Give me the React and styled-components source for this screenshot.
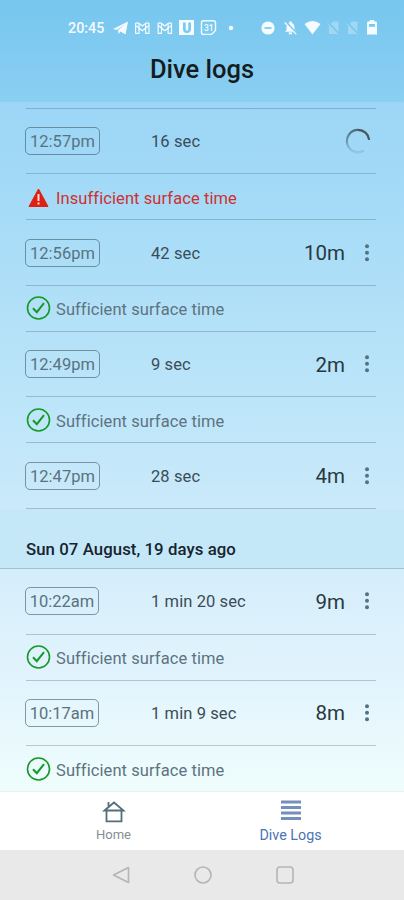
import styled, { createGlobalStyle } from "styled-components";

const GlobalStyle = createGlobalStyle`
  * {
    box-sizing: border-box;
  }

  body {
    margin: 0;
    font-family: Roboto, "Liberation Sans", sans-serif;
  }
`;

const Screen = styled.div`
  width: 404px;
  height: 900px;
  display: flex;
  flex-direction: column;
  overflow: hidden;
  background: #ffffff;
`;

const Header = styled.header`
  height: 102px;
  flex-shrink: 0;
  background: linear-gradient(#76c6ef, #8bcff2);
`;

const StatusBar = styled.div`
  height: 56px;
  padding: 0 26px 0 68px;
  display: flex;
  align-items: center;
  color: #f4fcff;
`;

const Clock = styled.span`
  width: 45px;
  font-size: 14.3px;
  font-weight: 500;
`;

const StatusIcons = styled.svg`
  width: 265px;
  height: 20px;
  display: block;
`;

const Title = styled.h1`
  margin: 0;
  height: 28px;
  line-height: 26px;
  text-align: center;
  font-size: 25.5px;
  font-weight: 500;
  color: #151c20;
`;

const LogList = styled.main`
  flex: 1;
  min-height: 0;
  overflow: hidden;
  padding-top: 6px;
  background: linear-gradient(
    #9cd5f6 0%,
    #a5dbf7 15%,
    #b3e1f8 32%,
    #c7e9fa 56%,
    #d5eefb 68%,
    #e2f4fd 84%,
    #effdfc 100%
  );
`;

const Group = styled.section`
  padding: 0 28px 0 26px;
`;

const Divider = styled.div`
  height: 1px;
  background: rgba(65, 100, 120, 0.32);
`;

const DiveRow = styled.div`
  height: 64.45px;
  display: grid;
  grid-template-columns: 125px 1fr auto 31px;
  align-items: center;
`;

const Time = styled.span`
  justify-self: start;
  width: ${(props) => (props.$morning ? "74px" : "75px")};
  height: 28px;
  line-height: 27px;
  margin-left: -1px;
  border: 1px solid rgba(65, 90, 105, 0.6);
  border-radius: 5px;
  text-align: center;
  font-size: 16.5px;
  white-space: nowrap;
  color: #5a7280;
`;

const Duration = styled.span`
  padding-top: 1px;
  font-size: 16.5px;
  letter-spacing: 0.1px;
  color: #3b4c56;
`;

const Depth = styled.span`
  padding-top: 1px;
  font-size: 20.5px;
  color: #2a3840;
`;

const Menu = styled.button`
  width: 43px;
  height: 28px;
  padding: 0;
  border: none;
  background: none;
  display: flex;
  align-items: center;
  justify-content: center;

  svg {
    display: block;
  }
`;

const Loader = styled.svg`
  grid-column: 3 / 5;
  justify-self: end;
  width: 26px;
  height: 26px;
  margin-right: 5px;
`;

const SurfaceRow = styled.div`
  height: 45px;
  display: flex;
  align-items: center;
  gap: 5px;
  font-size: 16.5px;
  letter-spacing: 0.08px;
  color: ${(props) => (props.$warning ? "#cf3030" : "#5d737f")};

  span {
    padding-top: 3px;
  }

  svg {
    flex-shrink: 0;
  }
`;

const DateHeading = styled.h2`
  height: 59.5px;
  margin: 0;
  padding: 20px 26px 0;
  line-height: 40px;
  background: #c5e8f9;
  font-size: 16.8px;
  font-weight: 500;
  letter-spacing: 0.06px;
  color: #15242d;
`;

const TabBar = styled.nav`
  height: 59px;
  flex-shrink: 0;
  display: flex;
  padding: 0 25px;
  border-top: 1px solid #e7f0f3;
  background: #ffffff;
`;

const Tab = styled.a`
  flex: 1;
  display: flex;
  flex-direction: column;
  align-items: center;
  padding-top: 7px;
  font-size: ${(props) => (props.$active ? "14.3px" : "13px")};
  line-height: 22px;
  color: ${(props) => (props.$active ? "#4b74b5" : "#868e93")};

  svg {
    width: 24px;
    height: 24px;
    margin-bottom: 1px;
  }
`;

const SystemBar = styled.footer`
  height: 50px;
  flex-shrink: 0;
  display: flex;
  align-items: center;
  justify-content: center;
  gap: 58px;
  padding-left: 2px;
  background: #e9e9e9;
`;

const todayDives = [
  { time: "12:57pm", duration: "16 sec", loading: true, surface: "Insufficient" },
  { time: "12:56pm", duration: "42 sec", depth: "10m", surface: "Sufficient" },
  { time: "12:49pm", duration: "9 sec", depth: "2m", surface: "Sufficient" },
  { time: "12:47pm", duration: "28 sec", depth: "4m" },
];

const augustDives = [
  { time: "10:22am", duration: "1 min 20 sec", depth: "9m", surface: "Sufficient" },
  { time: "10:17am", duration: "1 min 9 sec", depth: "8m", surface: "Sufficient" },
];

function WarningIcon() {
  return (
    <svg width="25" height="24" viewBox="0 0 25 24">
      <path d="M12.5 4 L22 21.5 H3 Z" fill="#df1f12" stroke="#df1f12" strokeLinejoin="round" />
      <path d="M12.5 9 V16 M12.5 17.6 V19.6" stroke="#fbe8e5" strokeWidth="1.9" />
    </svg>
  );
}

function CheckIcon() {
  return (
    <svg width="25" height="24" viewBox="0 0 25 24" fill="none" stroke="#169829">
      <circle cx="12.5" cy="12" r="11" strokeWidth="1.6" />
      <path d="M7 12.3 L10.8 16.2 L18 7.2" strokeWidth="2" />
    </svg>
  );
}

function Spinner() {
  return (
    <Loader viewBox="0 0 26 26" fill="none" strokeWidth="2.2">
      <defs>
        <linearGradient id="spin" x1="0" y1="0" x2="0" y2="1">
          <stop offset="0" stopColor="#4f6b7a" />
          <stop offset="0.5" stopColor="#6e98ad" />
          <stop offset="1" stopColor="#84b5cd" stopOpacity="0.5" />
        </linearGradient>
      </defs>
      <path d="M13 1.8 A11.3 11.3 0 1 0 19 22.8" stroke="url(#spin)" />
      <path d="M13 1.8 A11.3 11.3 0 0 1 24.2 11.8" stroke="#47565f" />
    </Loader>
  );
}

function DiveEntry({ dive }) {
  return (
    <>
      <DiveRow>
        <Time $morning={dive.time.endsWith("am")}>{dive.time}</Time>
        <Duration>{dive.duration}</Duration>
        {dive.loading ? (
          <Spinner />
        ) : (
          <>
            <Depth>{dive.depth}</Depth>
            <Menu aria-label="Dive options">
              <svg width="6" height="18" fill="#557282">
                <circle cx="3" cy="2.3" r="2" />
                <circle cx="3" cy="8.8" r="2" />
                <circle cx="3" cy="15.3" r="2" />
              </svg>
            </Menu>
          </>
        )}
      </DiveRow>
      <Divider />
      {dive.surface && (
        <>
          <SurfaceRow $warning={dive.surface === "Insufficient"}>
            {dive.surface === "Insufficient" ? <WarningIcon /> : <CheckIcon />}
            <span>{dive.surface} surface time</span>
          </SurfaceRow>
          <Divider />
        </>
      )}
    </>
  );
}

function StatusGlyphs() {
  return (
    <StatusIcons viewBox="113 18 265 20" fill="none" stroke="currentColor">
      <path d="M113 29 L128 21.5 L125.5 34.5 L120.5 31.5 L118.5 34 L118 30 L125 24.5 L116.5 30 Z" fill="currentColor" stroke="none" />
      {[135, 157.5].map((x) => (
        <g key={x} transform={`translate(${x} 22)`} strokeWidth="1.2" strokeLinejoin="round">
          <path d="M.6 1.5 Q2 .2 3.8 1.3 L7.3 4 L10.8 1.3 Q12.6 .2 14 1.5 V11.3 H10.6 V6 L7.3 8.7 L4 6 V11.3 H.6 Z" />
          <path d="M.6 3.5 L4 6 V1.5 M14 3.5 L10.6 6 V1.5" />
        </g>
      ))}
      <path d="M179 20 H194 V35 H179 Z M183 22.5 V29 Q183 33 186.7 33 Q191 33 191 29 V22.5 H188.3 V29 Q188.3 30.7 187 30.7 Q185.7 30.7 185.7 29 V22.5 Z" fill="currentColor" fillRule="evenodd" stroke="none" />
      <path d="M203.5 20.8 H213.5 Q215.5 20.8 215.5 22.8 V30.5 L211.5 34.4 H203.5 Q201.5 34.4 201.5 32.4 V22.8 Q201.5 20.8 203.5 20.8 Z" strokeWidth="1.4" />
      <text x="204" y="31.3" fill="currentColor" stroke="none" fontSize="8.5" fontWeight="500">31</text>
      <circle cx="231" cy="28" r="2.2" fill="currentColor" stroke="none" />
      <circle cx="268" cy="28" r="6.6" fill="currentColor" stroke="none" />
      <path d="M264.5 28 H271.5" stroke="#7dc8ef" strokeWidth="1.7" />
      <path d="M285 31.8 L286.5 30 V26.8 Q286.8 23.5 289.3 22.7 V21.5 H291.7 V22.7 Q294.3 23.5 294.5 26.8 V30 L296.3 31.8 Z" fill="currentColor" stroke="none" />
      <path d="M288.8 33.3 H292" strokeWidth="2" />
      <path d="M285.5 21.5 L297 34.5" stroke="#7dc8ef" strokeWidth="2.3" />
      <path d="M284.7 22.5 L296.3 34.3" strokeWidth="1.2" />
      <path d="M304.5 24 Q312.5 18.2 320.5 24 L312.5 34.5 Z" fill="currentColor" stroke="none" />
      {[328, 347].map((x) => (
        <g key={x} transform={`translate(${x} 21)`} opacity="0.3">
          <path d="M1 5 L5 .5 H10.5 V13 H1 Z" fill="currentColor" stroke="none" />
          <path d="M0 1.5 L11 13" stroke="#7dc8ef" strokeWidth="2" />
          <path d="M-.5 2.5 L10.5 14" strokeWidth="1" />
        </g>
      ))}
      <path d="M368 21.5 H369.8 V20 H374.3 V21.5 H376 Q377 21.5 377 22.5 V34.5 H367 V22.5 Q367 21.5 368 21.5 Z" fill="currentColor" stroke="none" />
      <path d="M369 24 H375 V26.8 H369 Z" fill="#7dc8ef" stroke="none" />
    </StatusIcons>
  );
}

export default function App() {
  return (
    <>
      <GlobalStyle />
      <Screen>
        <Header>
          <StatusBar>
            <Clock>20:45</Clock>
            <StatusGlyphs />
          </StatusBar>
          <Title>Dive logs</Title>
        </Header>

        <LogList>
          <Group>
            <Divider />
            {todayDives.map((dive) => (
              <DiveEntry key={dive.time} dive={dive} />
            ))}
          </Group>
          <DateHeading>Sun 07 August, 19 days ago</DateHeading>
          <Divider />
          <Group>
            {augustDives.map((dive) => (
              <DiveEntry key={dive.time} dive={dive} />
            ))}
          </Group>
        </LogList>

        <TabBar>
          <Tab>
            <svg viewBox="0 0 24 24" fill="none" stroke="#546e78" strokeWidth="1.8">
              <path d="M2.5 11.5 L12 3.5 L21.5 11.5 H2.5 Z M4.5 11.5 V22.3 H19.5 V11.5 M6.5 8 V3" />
            </svg>
            Home
          </Tab>
          <Tab $active>
            <svg viewBox="0 0 24 24" fill="#748fbb">
              <path d="M2 1.5 H22 V4.5 H2 Z M2 7 H22 V10 H2 Z M2 12.5 H22 V15.5 H2 Z M2 18 H22 V21 H2 Z" />
            </svg>
            Dive Logs
          </Tab>
        </TabBar>

        <SystemBar>
          <svg width="24" height="24" viewBox="0 0 24 24" fill="none" stroke="#b5b5b5" strokeWidth="1.6">
            <path d="M19.5 4.5 V19.5 L4.5 12 Z" strokeLinejoin="round" />
          </svg>
          <svg width="24" height="24" viewBox="0 0 24 24" fill="none" stroke="#b5b5b5" strokeWidth="1.6">
            <circle cx="12" cy="12" r="8" />
          </svg>
          <svg width="24" height="24" viewBox="0 0 24 24" fill="none" stroke="#b5b5b5" strokeWidth="1.6">
            <rect x="4" y="4" width="16" height="16" rx="3" />
          </svg>
        </SystemBar>
      </Screen>
    </>
  );
}
